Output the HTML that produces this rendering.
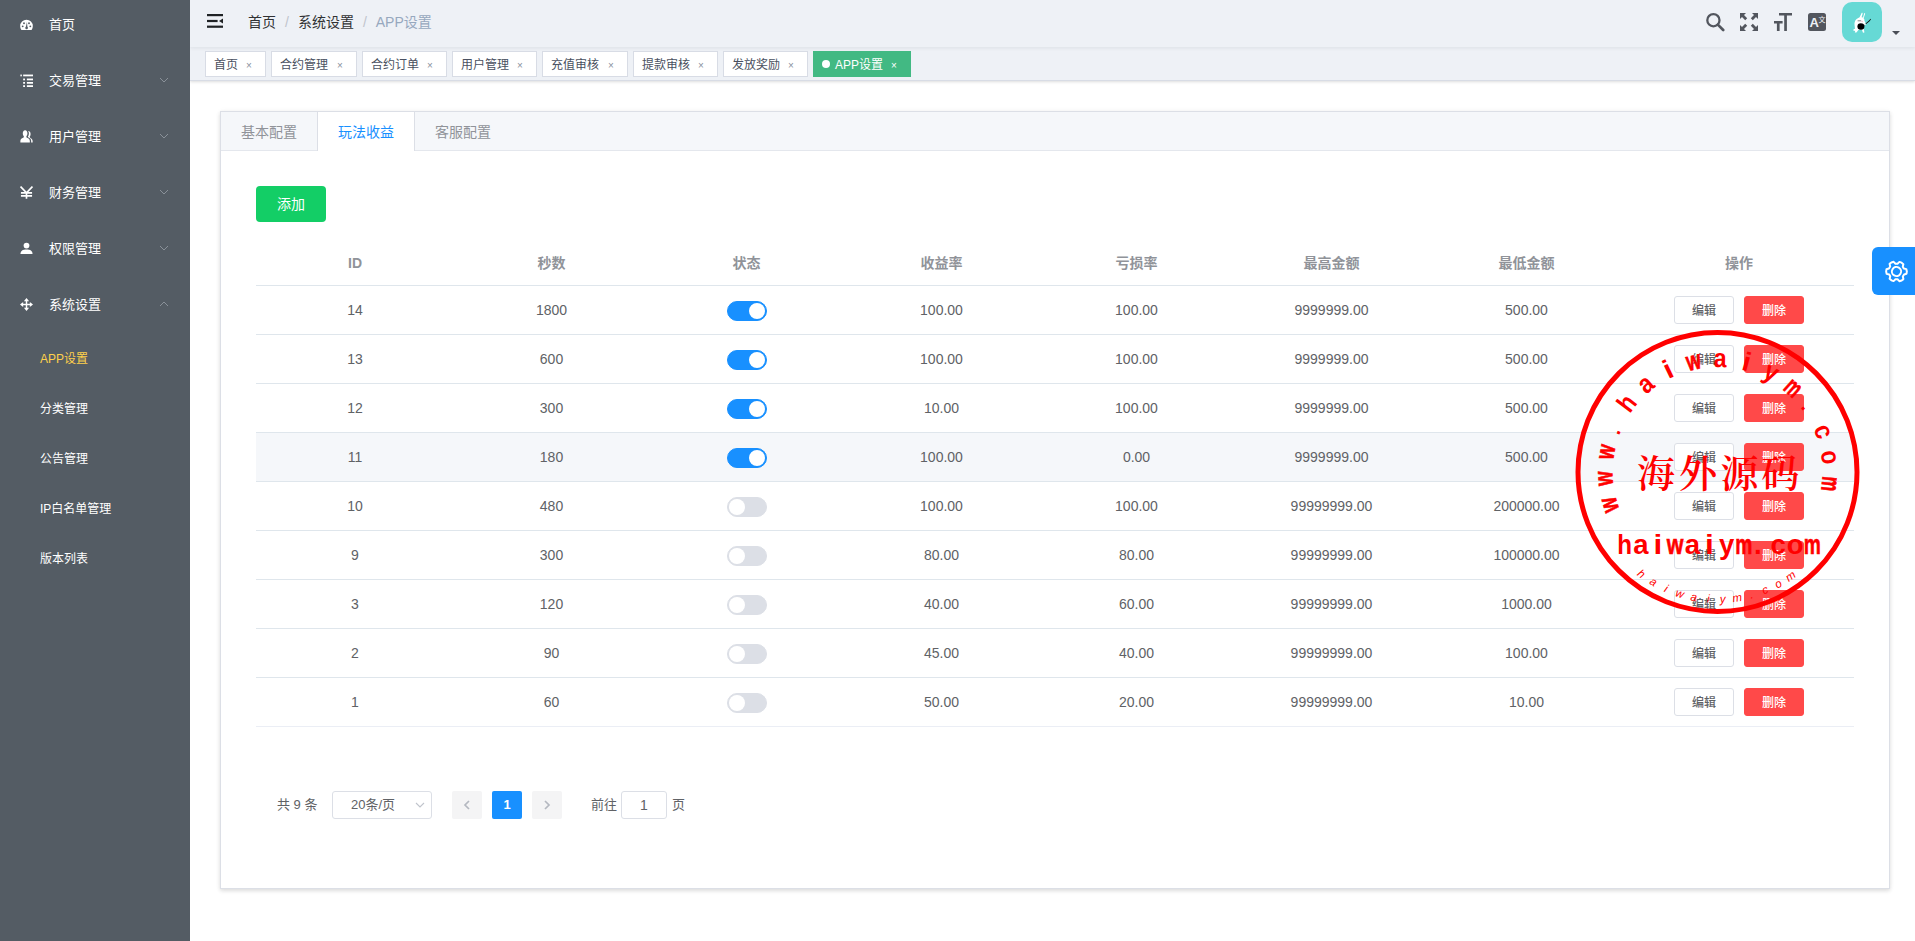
<!DOCTYPE html>
<html lang="zh-CN">
<head>
<meta charset="utf-8">
<title>APP设置</title>
<style>
*{box-sizing:border-box;}
html,body{margin:0;padding:0;}
body{width:1915px;height:941px;overflow:hidden;background:#fff;color:#606266;
  font-family:"Liberation Sans","Noto Sans CJK SC",sans-serif;font-size:14px;position:relative;}
/* ---------- sidebar ---------- */
#sidebar{position:absolute;left:0;top:0;width:190px;height:941px;background:#545c64;overflow:hidden;z-index:5;}
#sidebar .mi{position:absolute;left:0;width:190px;height:56px;line-height:56px;color:#fff;font-size:13px;}
#sidebar .mi .ic{position:absolute;left:20px;top:21.5px;width:13px;height:13px;}
#sidebar .mi .tx{position:absolute;left:49px;top:1px;}
#sidebar .mi .ar{position:absolute;left:159px;top:23px;width:10px;height:10px;}
#sidebar .si{position:absolute;left:40px;height:50px;line-height:51px;color:#fff;font-size:12px;white-space:nowrap;}
#sidebar .si.on{color:#ffd04b;}
/* ---------- navbar ---------- */
#navbar{position:absolute;left:190px;top:0;width:1725px;height:47px;background:#eef1f6;box-shadow:0 1px 4px rgba(0,21,41,.08);z-index:2;}
#hamb{position:absolute;left:17px;top:13px;width:18px;height:16px;}
#bread{position:absolute;left:58px;top:0;height:44px;line-height:44px;font-size:14px;white-space:nowrap;color:#303133;}
#bread .sep{color:#c0c4cc;margin:0 9px 0 9px;}
#bread .last{color:#97a8be;}
.tico{position:absolute;top:12px;width:20px;height:20px;}
#avatar{position:absolute;left:1652px;top:2px;width:40px;height:40px;border-radius:10px;background:#66d9d5;overflow:hidden;}
#caret{position:absolute;left:1702px;top:31px;width:0;height:0;border-left:4px solid transparent;border-right:4px solid transparent;border-top:4.5px solid #4a4e57;}
/* ---------- tags view ---------- */
#tags{position:absolute;left:190px;top:47px;width:1725px;height:34px;background:#eef1f6;border-bottom:1px solid #d8dce5;box-shadow:0 1px 3px 0 rgba(0,0,0,.12),0 0 3px 0 rgba(0,0,0,.04);}
#tags .tg{position:absolute;top:4px;height:26px;line-height:27px;border:1px solid #d8dce5;background:#fff;color:#495060;font-size:12px;padding:0 0 0 8px;white-space:nowrap;}
#tags .tg .x{position:absolute;right:8px;top:1px;width:16px;text-align:center;font-size:10px;color:#8a919e;line-height:26px;}
#tags .tg.on{background:#42b983;border-color:#42b983;color:#fff;padding-left:21px;}
#tags .tg.on .x{color:#fff;}
#tags .tg.on:before{content:"";position:absolute;left:8px;top:8px;width:8px;height:8px;border-radius:50%;background:#fff;}
/* ---------- card ---------- */
#card{position:absolute;left:220px;top:111px;width:1670px;height:778px;background:#fff;border:1px solid #dcdfe6;box-shadow:0 2px 4px 0 rgba(0,0,0,.12),0 0 6px 0 rgba(0,0,0,.04);}
#tabhd{position:absolute;left:0;top:0;width:1668px;height:39px;background:#f5f7fa;border-bottom:1px solid #e4e7ed;}
#tabhd .tb{position:absolute;top:0;height:38px;line-height:41px;width:96px;text-align:center;color:#909399;font-size:14px;}
#tabhd .tb.on{background:#fff;color:#1890ff;border-left:1px solid #dcdfe6;border-right:1px solid #dcdfe6;height:39px;width:98px;}
#add{position:absolute;left:35px;top:74px;width:70px;height:36px;line-height:36px;background:#13ce66;color:#fff;border-radius:4px;text-align:center;font-size:14px;}
/* ---------- table ---------- */
#tbl{position:absolute;left:35px;top:128px;width:1598px;}
.row{position:relative;width:1598px;height:49px;border-bottom:1px solid #dfe6ec;}
.row.hd{height:46px;color:#909399;font-weight:bold;}
.row.hov{background:#f5f7fa;}
.row:last-child{border-bottom-color:#ebeef5;}
.row .c{position:absolute;top:0;height:48px;line-height:48px;text-align:center;font-size:14px;color:#606266;white-space:nowrap;}
.row.hd .c{height:46px;line-height:46px;color:#909399;}
.c1{left:0;width:198px}.c2{left:198px;width:195px}.c3{left:393px;width:195px}.c4{left:588px;width:195px}
.c5{left:783px;width:195px}.c6{left:978px;width:195px}.c7{left:1173px;width:195px}.c8{left:1368px;width:230px}
.sw{position:absolute;left:471px;top:15px;width:40px;height:20px;border-radius:10px;background:#dcdfe6;border:1px solid #dcdfe6;}
.sw:after{content:"";position:absolute;left:1px;top:1px;width:16px;height:16px;border-radius:50%;background:#fff;}
.sw.on{background:#1890ff;border-color:#1890ff;}
.sw.on:after{left:21px;}
.bt{position:absolute;top:10px;width:60px;height:28px;line-height:29px;border-radius:3px;font-size:12px;text-align:center;font-weight:500;}
.bt.ed{left:1418px;background:#fff;border:1px solid #dcdfe6;color:#606266;}
.bt.de{left:1488px;background:#ff4949;border:1px solid #ff4949;color:#fff;}
/* ---------- pagination ---------- */
#pg{position:absolute;left:0;top:679px;width:900px;height:28px;font-size:13px;color:#606266;}
#pg .a{position:absolute;top:0;height:28px;line-height:28px;white-space:nowrap;}
#pg .sel{left:111px;width:100px;border:1px solid #dcdfe6;border-radius:3px;padding-left:18px;line-height:26px;}
#pg .pb{width:30px;border-radius:2px;background:#f4f4f5;text-align:center;color:#c0c4cc;}
#pg .pn{width:30px;border-radius:2px;background:#1890ff;color:#fff;text-align:center;font-weight:bold;}
#pg .inp{left:400px;width:46px;border:1px solid #dcdfe6;border-radius:3px;text-align:center;line-height:26px;font-size:14px;}
/* ---------- right panel button ---------- */
#rp{position:absolute;left:1872px;top:247px;width:48px;height:48px;background:#1890ff;border-radius:6px 0 0 6px;}
#stamp{position:absolute;left:1567px;top:322px;width:300px;height:300px;}
</style>
</head>
<body>
<div id="sidebar">
<div class="mi" style="top:-4px"><svg class="ic" viewBox="0 0 14 14"><path d="M0.2 8.6 A6.8 6.8 0 0 1 13.8 8.6 C13.8 10.4 13.2 12 12.4 13 L1.6 13 C0.8 12 0.2 10.4 0.2 8.6 Z" fill="#fff"/><circle cx="2.9" cy="9" r="1" fill="#545c64"/><circle cx="4.3" cy="5.6" r="1" fill="#545c64"/><circle cx="9.7" cy="5.6" r="1" fill="#545c64"/><circle cx="11.1" cy="9" r="1" fill="#545c64"/><path d="M6.1 10.4 L7.5 4.4 L8.1 10.6 Z" fill="#545c64"/><circle cx="7.1" cy="10.8" r="1.4" fill="#545c64"/></svg><span class="tx">首页</span></div>
<div class="mi" style="top:52px"><svg class="ic" viewBox="0 0 14 14"><g fill="#fff"><rect x="0.4" y="0.6" width="1.6" height="1.9"/><rect x="3.4" y="0.6" width="10.6" height="1.9"/><rect x="3.4" y="4.9" width="2" height="1.9"/><rect x="7.4" y="4.9" width="6.6" height="1.9"/><rect x="3.4" y="8.6" width="2" height="1.9"/><rect x="7.4" y="8.6" width="6.6" height="1.9"/><rect x="3.4" y="12.1" width="2" height="1.9"/><rect x="7.4" y="12.1" width="6.6" height="1.9"/></g></svg><span class="tx">交易管理</span><svg class="ar" viewBox="0 0 10 10"><path d="M1 3 L5 7 L9 3" fill="none" stroke="#8a9199" stroke-width="1"/></svg></div>
<div class="mi" style="top:108px"><svg class="ic" viewBox="0 0 14 14"><g fill="#fff" transform="translate(0 -0.7) scale(1 1.12)"><path d="M5.5 0.8 C3.8 0.8 3 2.2 3 3.8 C3 5 3.5 6.2 4.2 6.9 C4.2 7.6 3.8 8 2.8 8.4 C1.2 9 0.4 9.8 0.4 11.5 L0.4 12.6 L10.6 12.6 L10.6 11.5 C10.6 9.8 9.8 9 8.2 8.4 C7.2 8 6.8 7.6 6.8 6.9 C7.5 6.2 8 5 8 3.8 C8 2.2 7.2 0.8 5.5 0.8 Z"/><path d="M8.6 1.6 C9.3 2.2 9.6 3 9.6 4 C9.6 5.2 9.2 6.3 8.5 7.1 C8.8 7.7 9.4 7.9 10.2 8.3 C11.4 8.9 12 9.8 12 11.2 L12 12.6 L13.6 12.6 L13.6 11.3 C13.6 10 12.9 9.2 11.6 8.6 C10.8 8.2 10.4 7.9 10.4 7.2 C11 6.6 11.4 5.5 11.4 4.4 C11.4 2.8 10.4 1.6 8.6 1.6 Z"/></g></svg><span class="tx">用户管理</span><svg class="ar" viewBox="0 0 10 10"><path d="M1 3 L5 7 L9 3" fill="none" stroke="#8a9199" stroke-width="1"/></svg></div>
<div class="mi" style="top:164px"><svg class="ic" viewBox="0 0 14 14"><path d="M0.6 0.6 L7 7.4 L13.4 0.6 M7 7.4 L7 13.6 M1 7.4 L13 7.4 M1 10.6 L13 10.6" fill="none" stroke="#fff" stroke-width="1.8"/></svg><span class="tx">财务管理</span><svg class="ar" viewBox="0 0 10 10"><path d="M1 3 L5 7 L9 3" fill="none" stroke="#8a9199" stroke-width="1"/></svg></div>
<div class="mi" style="top:220px"><svg class="ic" viewBox="0 0 14 14"><g fill="#fff"><circle cx="7" cy="3.8" r="3.1"/><path d="M0.5 13 C0.5 9.5 3 8 7 8 C11 8 13.5 9.5 13.5 13 Z"/></g></svg><span class="tx">权限管理</span><svg class="ar" viewBox="0 0 10 10"><path d="M1 3 L5 7 L9 3" fill="none" stroke="#8a9199" stroke-width="1"/></svg></div>
<div class="mi" style="top:276px"><svg class="ic" viewBox="0 0 14 14"><g fill="#fff"><rect x="6.2" y="2" width="1.6" height="10"/><rect x="2" y="6.2" width="10" height="1.6"/><path d="M7 0 L9.8 3.4 L4.2 3.4 Z"/><path d="M7 14 L9.8 10.6 L4.2 10.6 Z"/><path d="M0 7 L3.4 4.2 L3.4 9.8 Z"/><path d="M14 7 L10.6 4.2 L10.6 9.8 Z"/></g></svg><span class="tx">系统设置</span><svg class="ar" viewBox="0 0 10 10"><path d="M1 7 L5 3 L9 7" fill="none" stroke="#8a9199" stroke-width="1"/></svg></div>
<div class="si on" style="top:334px">APP设置</div>
<div class="si" style="top:384px">分类管理</div>
<div class="si" style="top:434px">公告管理</div>
<div class="si" style="top:484px">IP白名单管理</div>
<div class="si" style="top:534px">版本列表</div>
</div>
<div id="navbar">
<svg id="hamb" viewBox="0 0 18 16"><g fill="#1f2225"><rect x="0" y="1" width="16" height="2.2"/><rect x="0" y="6.9" width="10.6" height="2.2"/><rect x="0" y="12.6" width="16" height="2.2"/><path d="M16 5.4 L16 10.6 L12 8 Z"/></g></svg>
<div id="bread"><span>首页</span><span class="sep">/</span><span>系统设置</span><span class="sep">/</span><span class="last">APP设置</span></div>
<svg class="tico" style="left:1515px" viewBox="0 0 20 20"><circle cx="8.4" cy="8.2" r="6.1" fill="none" stroke="#52565e" stroke-width="2.3"/><path d="M12.8 12.6 L18.2 18" stroke="#52565e" stroke-width="2.7" stroke-linecap="round"/></svg>
<svg class="tico" style="left:1549px" viewBox="0 0 20 20"><g fill="#52565e"><path d="M1 1 L7 1 L5 3 L8.2 6.2 L6.2 8.2 L3 5 L1 7 Z"/><path d="M19 1 L13 1 L15 3 L11.8 6.2 L13.8 8.2 L17 5 L19 7 Z"/><path d="M1 19 L7 19 L5 17 L8.2 13.8 L6.2 11.8 L3 15 L1 13 Z"/><path d="M19 19 L13 19 L15 17 L11.8 13.8 L13.8 11.8 L17 15 L19 13 Z"/></g></svg>
<svg class="tico" style="left:1583px" viewBox="0 0 20 20"><g fill="#52565e"><rect x="6" y="1" width="13" height="2.5"/><rect x="11.2" y="1" width="2.7" height="18"/><rect x="1" y="9" width="8.6" height="2.5"/><rect x="3.9" y="9" width="2.7" height="10"/></g></svg>
<svg class="tico" style="left:1617px" viewBox="0 0 20 20"><rect x="1" y="1" width="18" height="18" rx="2.5" fill="#52565e"/><text x="2.6" y="15.4" font-family="Liberation Sans, sans-serif" font-weight="bold" font-size="13" fill="#eef1f6">A</text><text x="11.6" y="9.6" font-family="Noto Sans CJK SC, sans-serif" font-size="7" fill="#eef1f6">文</text></svg>
<div id="avatar"><svg viewBox="0 0 40 40" width="40" height="40"><g fill="#fff"><path d="M19.6 11 C20.2 10.4 20.8 10.8 20.6 11.8 L19.6 15.2 L21 15.4 L22.2 11.4 C22.6 10.6 23.4 10.9 23.1 11.9 L21.6 16.2 C22.4 17 22.6 18 22.4 19 L23.4 20.2 L22.4 22.6 L21.8 26.6 L22.4 30.4 L21 30.8 L19.8 27.6 L16.4 28 L14.4 30.6 L12.8 30.4 L13.2 29 L11.2 28.6 L11.6 27.2 L13 26.8 L12.6 23.4 C12.2 21 12.8 18.6 14.6 17 L17.6 15.2 Z"/></g><rect x="15.6" y="18.3" width="3.6" height="1" fill="#888"/><circle cx="20.1" cy="19.5" r="0.7" fill="#f7b6c8"/><ellipse cx="18.9" cy="24.5" rx="3.5" ry="3.2" fill="#000"/><path d="M21.8 22.9 L27 18.4 L28.5 16.7 L29 17.3 L27.6 19.2 L22.3 23.5 Z" fill="#111"/><circle cx="23" cy="22.2" r="0.9" fill="#fff"/></svg></div>
<div id="caret"></div>
</div>
<div id="tags">
<div class="tg" style="left:15px;width:61px">首页<span class="x">×</span></div>
<div class="tg" style="left:81px;width:86px">合约管理<span class="x">×</span></div>
<div class="tg" style="left:172px;width:85px">合约订单<span class="x">×</span></div>
<div class="tg" style="left:262px;width:85px">用户管理<span class="x">×</span></div>
<div class="tg" style="left:352px;width:86px">充值审核<span class="x">×</span></div>
<div class="tg" style="left:443px;width:85px">提款审核<span class="x">×</span></div>
<div class="tg" style="left:533px;width:85px">发放奖励<span class="x">×</span></div>
<div class="tg on" style="left:623px;width:98px">APP设置<span class="x">×</span></div>
</div>
<div id="card">
<div id="tabhd"><div class="tb" style="left:0">基本配置</div><div class="tb on" style="left:96px">玩法收益</div><div class="tb" style="left:194px">客服配置</div></div>
<div id="add">添加</div>
<div id="tbl">
<div class="row hd"><div class="c c1">ID</div><div class="c c2">秒数</div><div class="c c3">状态</div><div class="c c4">收益率</div><div class="c c5">亏损率</div><div class="c c6">最高金额</div><div class="c c7">最低金额</div><div class="c c8">操作</div></div>
<div class="row"><div class="c c1">14</div><div class="c c2">1800</div><div class="sw on"></div><div class="c c4">100.00</div><div class="c c5">100.00</div><div class="c c6">9999999.00</div><div class="c c7">500.00</div><div class="bt ed">编辑</div><div class="bt de">删除</div></div>
<div class="row"><div class="c c1">13</div><div class="c c2">600</div><div class="sw on"></div><div class="c c4">100.00</div><div class="c c5">100.00</div><div class="c c6">9999999.00</div><div class="c c7">500.00</div><div class="bt ed">编辑</div><div class="bt de">删除</div></div>
<div class="row"><div class="c c1">12</div><div class="c c2">300</div><div class="sw on"></div><div class="c c4">10.00</div><div class="c c5">100.00</div><div class="c c6">9999999.00</div><div class="c c7">500.00</div><div class="bt ed">编辑</div><div class="bt de">删除</div></div>
<div class="row hov"><div class="c c1">11</div><div class="c c2">180</div><div class="sw on"></div><div class="c c4">100.00</div><div class="c c5">0.00</div><div class="c c6">9999999.00</div><div class="c c7">500.00</div><div class="bt ed">编辑</div><div class="bt de">删除</div></div>
<div class="row"><div class="c c1">10</div><div class="c c2">480</div><div class="sw"></div><div class="c c4">100.00</div><div class="c c5">100.00</div><div class="c c6">99999999.00</div><div class="c c7">200000.00</div><div class="bt ed">编辑</div><div class="bt de">删除</div></div>
<div class="row"><div class="c c1">9</div><div class="c c2">300</div><div class="sw"></div><div class="c c4">80.00</div><div class="c c5">80.00</div><div class="c c6">99999999.00</div><div class="c c7">100000.00</div><div class="bt ed">编辑</div><div class="bt de">删除</div></div>
<div class="row"><div class="c c1">3</div><div class="c c2">120</div><div class="sw"></div><div class="c c4">40.00</div><div class="c c5">60.00</div><div class="c c6">99999999.00</div><div class="c c7">1000.00</div><div class="bt ed">编辑</div><div class="bt de">删除</div></div>
<div class="row"><div class="c c1">2</div><div class="c c2">90</div><div class="sw"></div><div class="c c4">45.00</div><div class="c c5">40.00</div><div class="c c6">99999999.00</div><div class="c c7">100.00</div><div class="bt ed">编辑</div><div class="bt de">删除</div></div>
<div class="row"><div class="c c1">1</div><div class="c c2">60</div><div class="sw"></div><div class="c c4">50.00</div><div class="c c5">20.00</div><div class="c c6">99999999.00</div><div class="c c7">10.00</div><div class="bt ed">编辑</div><div class="bt de">删除</div></div>
</div>
<div id="pg">
<span class="a" style="left:56px">共 9 条</span>
<span class="a sel">20条/页<svg style="position:absolute;right:6px;top:9px" width="10" height="8" viewBox="0 0 10 8"><path d="M1 2 L5 6 L9 2" fill="none" stroke="#c0c4cc" stroke-width="1.1"/></svg></span>
<span class="a pb" style="left:231px"><svg width="8" height="10" viewBox="0 0 8 10" style="position:absolute;left:11px;top:9px"><path d="M6 1 L2 5 L6 9" fill="none" stroke="#b4b8c0" stroke-width="1.7"/></svg></span>
<span class="a pn" style="left:271px">1</span>
<span class="a pb" style="left:311px"><svg width="8" height="10" viewBox="0 0 8 10" style="position:absolute;left:11px;top:9px"><path d="M2 1 L6 5 L2 9" fill="none" stroke="#b4b8c0" stroke-width="1.7"/></svg></span>
<span class="a" style="left:370px">前往</span>
<span class="a inp">1</span>
<span class="a" style="left:451px">页</span>
</div>
</div>
<div id="rp"><svg width="25" height="25" viewBox="0 0 24 24" style="position:absolute;left:11.5px;top:11.5px"><g transform="rotate(30 12 12)"><path d="M12 2.2 L14.2 2.6 L14.9 5 L16.6 6 L19 5.3 L20.6 7 L21.4 9 L19.7 10.8 L19.7 13.2 L21.4 15 L20.6 17 L19 18.7 L16.6 18 L14.9 19 L14.2 21.4 L12 21.8 L9.8 21.4 L9.1 19 L7.4 18 L5 18.7 L3.4 17 L2.6 15 L4.3 13.2 L4.3 10.8 L2.6 9 L3.4 7 L5 5.3 L7.4 6 L9.1 5 L9.8 2.6 Z" fill="none" stroke="#fff" stroke-width="1.9" stroke-linejoin="round"/><circle cx="12" cy="12" r="4.4" fill="none" stroke="#fff" stroke-width="1.9"/></g></svg></div>
<svg id="stamp" viewBox="0 0 300 300">
<circle cx="150.5" cy="150.0" r="139.5" fill="none" stroke="#f00" stroke-width="5"/>
<g font-family="Liberation Sans, sans-serif" font-weight="bold" font-size="26.5" fill="#f00" text-anchor="middle">
<text stroke="#f00" stroke-width="0.7" transform="translate(50.03 180.52) rotate(-106.90) scale(0.70 1)">w</text>
<text stroke="#f00" stroke-width="0.7" transform="translate(45.68 156.17) rotate(-93.37) scale(0.70 1)">w</text>
<text stroke="#f00" stroke-width="0.7" transform="translate(47.15 131.48) rotate(-79.84) scale(0.70 1)">w</text>
<text transform="translate(52.93 111.19) rotate(-68.31) scale(0.75 0.75)">.</text>
<text transform="translate(66.89 86.49) rotate(-52.78) scale(0.85 1)">h</text>
<text transform="translate(84.07 68.69) rotate(-39.25) scale(0.88 1)">a</text>
<text transform="translate(104.93 55.40) rotate(-25.72) scale(1.10 1)">i</text>
<text stroke="#f00" stroke-width="0.7" transform="translate(128.33 47.37) rotate(-12.19) scale(0.70 1)">w</text>
<text transform="translate(152.96 45.03) rotate(1.34) scale(0.88 1)">a</text>
<text transform="translate(177.45 48.52) rotate(14.87) scale(1.10 1)">i</text>
<text transform="translate(200.44 57.64) rotate(28.40) scale(0.90 1)">y</text>
<text stroke="#f00" stroke-width="0.7" transform="translate(220.66 71.88) rotate(41.93) scale(0.62 1)">m</text>
<text transform="translate(234.86 87.48) rotate(53.46) scale(0.75 0.75)">.</text>
<text transform="translate(248.52 112.35) rotate(68.99) scale(0.90 1)">c</text>
<text transform="translate(254.61 136.33) rotate(82.52) scale(0.85 1)">o</text>
<text stroke="#f00" stroke-width="0.7" transform="translate(254.92 161.07) rotate(96.05) scale(0.62 1)">m</text>
</g>
<g font-family="Noto Serif CJK SC, serif" font-weight="600" font-size="38" fill="#f00" text-anchor="middle">
<text x="89.0" y="165">海</text>
<text x="131.0" y="165">外</text>
<text x="172.4" y="165">源</text>
<text x="213.3" y="165">码</text>
</g>
<g font-family="Liberation Sans, sans-serif" font-weight="bold" font-size="27.5" fill="#f00" text-anchor="middle">
<text transform="translate(57.60 231.8) scale(0.88 1)">h</text>
<text transform="translate(73.85 231.8) scale(1.00 1)">a</text>
<text transform="translate(91.00 231.8) scale(1.15 1)">i</text>
<text stroke="#f00" stroke-width="0.6" transform="translate(108.15 231.8) scale(0.78 1)">w</text>
<text transform="translate(125.30 231.8) scale(1.00 1)">a</text>
<text transform="translate(142.45 231.8) scale(1.15 1)">i</text>
<text transform="translate(159.60 231.8) scale(1.00 1)">y</text>
<text stroke="#f00" stroke-width="0.6" transform="translate(176.75 231.8) scale(0.70 1)">m</text>
<text transform="translate(190.90 231.8) scale(1.00 1)">.</text>
<text transform="translate(211.05 231.8) scale(1.00 1)">c</text>
<text transform="translate(228.20 231.8) scale(1.00 1)">o</text>
<text stroke="#f00" stroke-width="0.6" transform="translate(245.35 231.8) scale(0.70 1)">m</text>
</g>
<g font-family="Liberation Sans, sans-serif" font-style="italic" font-size="11.5" fill="#f00" text-anchor="middle">
<text transform="translate(72.03 254.90) rotate(36.80)">h</text>
<text transform="translate(84.47 263.14) rotate(30.27)">a</text>
<text transform="translate(97.76 269.92) rotate(23.74)">i</text>
<text transform="translate(111.74 275.13) rotate(17.21)">w</text>
<text transform="translate(126.22 278.73) rotate(10.68)">a</text>
<text transform="translate(141.02 280.66) rotate(4.15)">i</text>
<text transform="translate(155.94 280.89) rotate(-2.38)">y</text>
<text transform="translate(170.79 279.42) rotate(-8.91)">m</text>
<text transform="translate(185.38 276.27) rotate(-15.44)">.</text>
<text transform="translate(199.51 271.49) rotate(-21.97)">c</text>
<text transform="translate(213.01 265.13) rotate(-28.50)">o</text>
<text transform="translate(225.69 257.27) rotate(-35.03)">m</text>
</g>
</svg>
</body>
</html>
